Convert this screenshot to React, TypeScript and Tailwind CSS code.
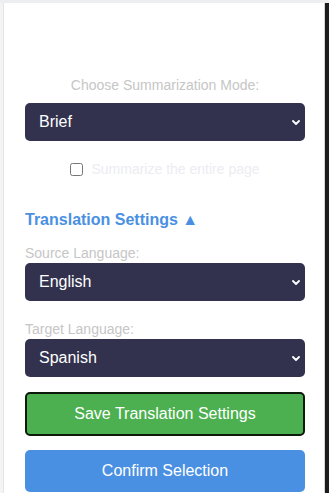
import { useState } from 'react';

type SelectProps = {
  value: string;
  options: string[];
  onChange: (v: string) => void;
};

function DarkSelect({ value, options, onChange }: SelectProps) {
  return (
    <div className="relative">
      <select
        value={value}
        onChange={(e) => onChange(e.target.value)}
        className="block h-[38px] w-full appearance-none rounded-[5px] bg-[#32324e] pl-[14px] pr-8 text-[16px] leading-[18px] text-white outline-none"
      >
        {options.map((o) => (
          <option key={o} value={o}>
            {o}
          </option>
        ))}
      </select>
      {/* chevron drawn over the select */}
      <svg
        className="pointer-events-none absolute right-[5px] top-[17px] h-[5px] w-[8px]"
        viewBox="0 0 8 5"
        fill="none"
      >
        <polyline points="1,1 4,4 7,1" stroke="white" strokeWidth="1.8" strokeLinecap="round" strokeLinejoin="round" />
      </svg>
    </div>
  );
}

export default function App() {
  const [mode, setMode] = useState('Brief');
  const [wholePage, setWholePage] = useState(false);
  const [source, setSource] = useState('English');
  const [target, setTarget] = useState('Spanish');

  return (
    <div className="flex h-[493px] w-[329px] flex-col overflow-hidden bg-white font-['Liberation_Sans',Arial,sans-serif]">
      <div className="h-[3px] shrink-0 bg-[#eceef0]" />
      <div className="flex min-h-0 flex-1">
        <div className="w-[4px] shrink-0 border-r border-[#e4e4e4] bg-[#f4f4f4]" />

        <div className="flex min-w-0 flex-1 flex-col pl-[21px] pr-[19px] pt-[74px]">
          <p className="text-center text-[14px] leading-[16px] text-[#c6c6c6]">Choose Summarization Mode:</p>
          <div className="mt-[10px]">
            <DarkSelect value={mode} options={['Brief', 'Detailed', 'Bullet Points']} onChange={setMode} />
          </div>

          <label className="mt-[20px] flex h-[16px] items-center justify-center gap-[8px] text-[14px] leading-[16px] text-[#ececf2]">
            <input
              type="checkbox"
              checked={wholePage}
              onChange={(e) => setWholePage(e.target.checked)}
              className="m-0 h-[13px] w-[13px]"
            />
            <span>Summarize the entire page</span>
          </label>

          <h3 className="mt-[34px] text-[16px] font-bold leading-[18px] text-[#4a90e2]">Translation Settings ▲</h3>

          <p className="mt-[16px] text-[14px] leading-[16px] text-[#c6c6c6]">Source Language:</p>
          <div className="mt-[2px]">
            <DarkSelect value={source} options={['English', 'French', 'German', 'Spanish']} onChange={setSource} />
          </div>

          <p className="mt-[20px] text-[14px] leading-[16px] text-[#c6c6c6]">Target Language:</p>
          <div className="mt-[2px]">
            <DarkSelect value={target} options={['Spanish', 'English', 'French', 'German']} onChange={setTarget} />
          </div>

          <button
            type="button"
            className="mt-[15px] h-[44px] w-full rounded-[5px] border-2 border-[#0b1a0b] bg-[#4caf50] text-[16px] text-white"
          >
            Save Translation Settings
          </button>
          <button
            type="button"
            className="mt-[14px] h-[42px] w-full shrink-0 rounded-[5px] bg-[#4a90e2] text-[16px] text-white"
          >
            Confirm Selection
          </button>
        </div>

        <div className="w-[5px] shrink-0 border-l border-[#d6d6d6] bg-[#1c1c1c]" />
      </div>
    </div>
  );
}
